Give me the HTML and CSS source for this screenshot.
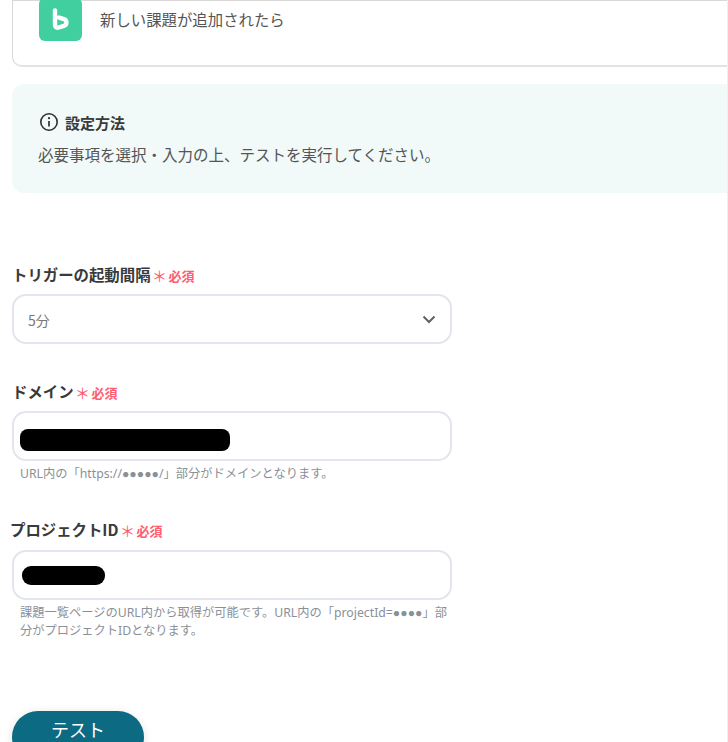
FILE: index.html
```html
<!DOCTYPE html>
<html lang="ja">
<head>
    <meta charset="UTF-8">
    <meta name="viewport" content="width=device-width, initial-scale=1.0">
    <title>トリガー設定</title>
    <link rel="stylesheet" href="styles.css">
</head>
<body>
    <div class="page">
        <!-- トリガーのカード -->
        <div class="app-card">
            <div class="app-icon">
                <svg width="43" height="43" viewBox="0 0 43 43">
                    <path d="M16 12.5V27c0 1.7 1.4 3 3 2.6l6-1.8c3.2-1 3.2-5.6 0-6.6L20 19.6" fill="none" stroke="#fff" stroke-width="4.4" stroke-linecap="round" stroke-linejoin="round"/>
                </svg>
            </div>
            <span class="app-card-text">新しい課題が追加されたら</span>
        </div>

        <!-- 設定方法 -->
        <div class="info-box">
            <div class="info-title">
                <svg width="20" height="20" viewBox="0 0 20 20">
                    <circle cx="10" cy="10" r="8.2" fill="none" stroke="#2f2f2f" stroke-width="1.6"/>
                    <circle cx="10" cy="6.2" r="1.1" fill="#2f2f2f"/>
                    <path d="M10 9v5.4" stroke="#2f2f2f" stroke-width="1.7" fill="none"/>
                </svg>
                <span>設定方法</span>
            </div>
            <p class="info-text">必要事項を選択・入力の上、テストを実行してください。</p>
        </div>

        <!-- 入力フォーム -->
        <div class="field field-first">
            <div class="field-label">トリガーの起動間隔<span class="required"><span class="asterisk">＊</span>必須</span></div>
            <div class="input select-input">
                <span>5分</span>
                <svg width="14" height="9" viewBox="0 0 14 9">
                    <path d="M1.5 1.5L7 7l5.5-5.5" fill="none" stroke="#5f6368" stroke-width="2"/>
                </svg>
            </div>
        </div>

        <div class="field field-domain">
            <div class="field-label">ドメイン<span class="required"><span class="asterisk">＊</span>必須</span></div>
            <div class="input">
                <div class="masked masked-domain"></div>
            </div>
            <p class="hint">URL内の「https://●●●●●/」部分がドメインとなります。</p>
        </div>

        <div class="field field-project">
            <div class="field-label">プロジェクトID<span class="required"><span class="asterisk">＊</span>必須</span></div>
            <div class="input">
                <div class="masked masked-project"></div>
            </div>
            <p class="hint">課題一覧ページのURL内から取得が可能です。URL内の「projectId=●●●●」部分がプロジェクトIDとなります。</p>
        </div>

        <button class="test-btn">テスト</button>
    </div>
</body>
</html>
```

FILE: styles.css
```css
/* 全体 */
html, body {
    margin: 0;
    padding: 0;
    height: 100%;
    overflow: hidden;
    background-color: #fff;
}

body {
    font-family: "Noto Sans CJK JP", "Noto Sans", sans-serif;
    color: #4a4a4a;
}

.page {
    height: 742px;
    padding-left: 12px;
    overflow: hidden;
    border-right: 1px solid #f0f0f0;
    box-sizing: border-box;
}

/* カード */
.app-card {
    display: flex;
    align-items: flex-start;
    height: 67px;
    box-sizing: border-box;
    padding-left: 26px;
    border: 1px solid #d8d8d8;
    border-right: none;
    border-bottom-width: 2px;
    border-bottom-color: #e2e2e2;
    border-bottom-left-radius: 10px;
}

.app-icon {
    flex-shrink: 0;
    width: 43px;
    height: 43px;
    margin-top: -3px;
    background-color: #41cf9f;
    border-radius: 6px;
}

.app-icon svg {
    display: block;
}

.app-card-text {
    margin: 6px 0 0 18px;
    font-size: 15.4px;
    line-height: 24px;
    color: #555;
}

/* 設定方法 */
.info-box {
    height: 109px;
    box-sizing: border-box;
    margin-top: 17px;
    padding: 26px 0 0 26px;
    background-color: #f1f9f9;
    border-radius: 12px 0 0 12px;
}

.info-title {
    display: flex;
    align-items: center;
    gap: 6px;
    height: 24px;
    margin-left: 1px;
    font-size: 15px;
    font-weight: 700;
    color: #3a3a3a;
}

.info-text {
    margin: 8px 0 0;
    font-size: 15.5px;
    line-height: 24px;
    color: #555;
}

/* フォーム */
.field {
    width: 440px;
}

.field-first {
    margin-top: 69px;
}

.field-domain {
    margin-top: 35px;
}

.field-project {
    margin-top: 34px;
}

.field-label {
    display: flex;
    align-items: center;
    height: 26px;
    box-sizing: border-box;
    padding-bottom: 2px;
    font-size: 15.4px;
    font-weight: 700;
    color: #3a3a3a;
}

.field-project .field-label {
    margin-left: -2px;
}

.required {
    display: flex;
    align-items: center;
    margin-left: 1.5px;
    padding-top: 2px;
    font-size: 13px;
    font-weight: 700;
    color: #ff5c70;
}

.asterisk {
    margin-right: 1.5px;
    padding-top: 2px;
    font-size: 15px;
    font-weight: 400;
    line-height: 12px;
}

.input {
    display: flex;
    align-items: center;
    height: 50px;
    box-sizing: border-box;
    margin-top: 6px;
    padding: 0 6px;
    border: 2px solid #e2e6ec;
    border-radius: 14px;
    background-color: #fff;
    font-size: 14px;
    color: #777;
}

.field-project .input {
    margin-top: 7px;
}

.select-input {
    justify-content: space-between;
    padding: 1px 14px 0;
}

.masked {
    background-color: #000;
}

.masked-domain {
    width: 210px;
    height: 22px;
    margin-top: 7px;
    border-radius: 8px;
}

.masked-project {
    width: 83px;
    height: 19px;
    margin-left: 2px;
    border-radius: 9px;
}

/* 伏せ字の丸を小さくするため Liberation Sans を CJK より先に置く */
.hint {
    margin: 4px 0 0;
    padding-left: 8px;
    font-size: 12.25px;
    line-height: 18px;
    color: #8a8f98;
    font-family: "Noto Sans", "Liberation Sans", "Noto Sans CJK JP", sans-serif;
}

/* テストボタン */
.test-btn {
    display: block;
    width: 132px;
    height: 52px;
    margin-top: 71px;
    padding: 0 0 16px;
    border: none;
    border-radius: 26px;
    background-color: #0c6a82;
    box-shadow: 0 2px 10px rgba(0, 0, 0, 0.12);
    font-family: inherit;
    font-size: 18px;
    color: #fff;
}
```
